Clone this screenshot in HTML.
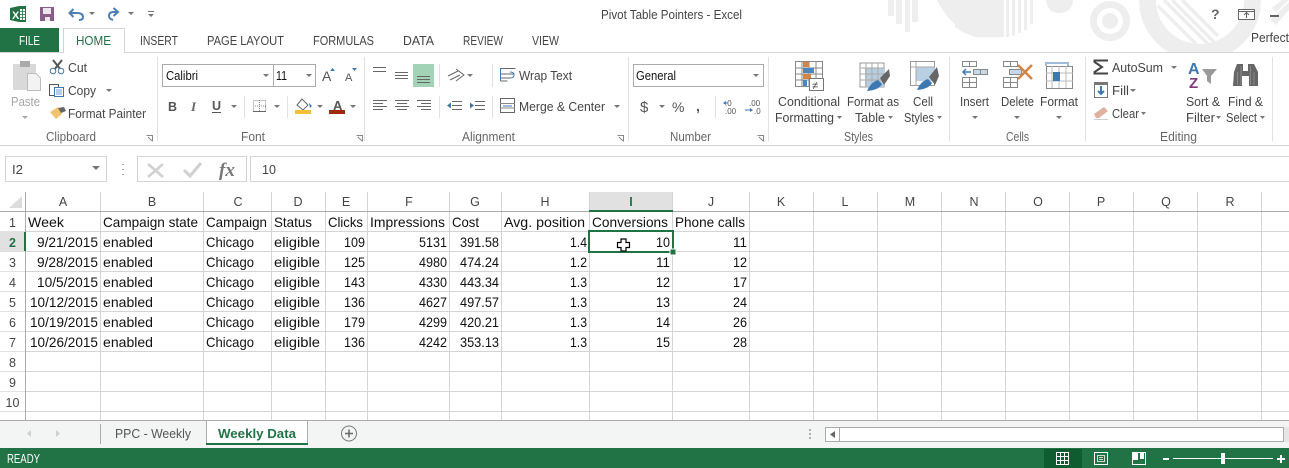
<!DOCTYPE html>
<html><head><meta charset="utf-8"><title>Pivot Table Pointers - Excel</title>
<style>
html,body{margin:0;padding:0;background:#fff;width:1289px;height:468px;overflow:hidden}
svg{display:block}
text{font-family:"Liberation Sans",sans-serif;white-space:pre}
.r{font-size:12.5px;fill:#444}
.g{font-size:12.5px;fill:#666}
.c{font-size:14px;fill:#111}
.h{font-size:12.5px;fill:#444}
.a{fill:#777}
</style></head><body>
<svg width="1289" height="468" viewBox="0 0 1289 468" xmlns="http://www.w3.org/2000/svg" shape-rendering="geometricPrecision">
<defs><clipPath id="ci"><circle cx="1200" cy="0" r="44"/></clipPath></defs>
<rect width="1289" height="468" fill="#fff"/>
<!-- watermark -->
<g fill="#eeeeee">
<rect x="888" y="0" width="6" height="16"/><rect x="896" y="0" width="6" height="24"/><rect x="905" y="0" width="5" height="32"/><rect x="912" y="0" width="6" height="22"/>
<path d="M937 0 L957 0 L957 26 Q945 16 937 0Z"/>
<path d="M955 0H1004V37H976Q964 34 955 27Z"/>
<path d="M1006 0h3V37h-3ZM1012 0h3V36h-3ZM1018 0h3V33h-3ZM1024 0h3V30h-3ZM1030 0h3V24h-3Z"/>
<path d="M1046 0H1073Q1072 13 1059 13 1047 13 1046 0Z"/>
<path fill-rule="evenodd" d="M1110 1a20 20 0 1 0 .01 0ZM1110 8a13 13 0 1 1-.01 0Z"/>
<circle cx="1110" cy="21" r="8"/>
<path fill-rule="evenodd" d="M1139 0a61 61 0 0 0 122 0ZM1156 0a44 44 0 0 0 88 0Z"/>
<g stroke="#eeeeee" stroke-width="3.500" fill="none" clip-path="url(#ci)"><path d="M1158 6L1200 48M1164 0L1212 48M1172 0L1214 42M1182 0L1218 36"/></g>
<path d="M1270 20L1289 2V10L1276 25Z M1282 0H1289L1276 12 1272 8Z"/>
</g>
<rect x="0" y="53" width="1289" height="93" fill="#fff"/>
<!-- title bar -->
<path d="M10 8L19 6H26V22H19L10 20Z" fill="#217346"/><rect x="19.500" y="8.500" width="6" height="12" fill="#fff" stroke="#217346"/>
<path d="M20 11.500H25M20 14.500H25M20 17.500H25M22.500 8V20" stroke="#217346" fill="none" stroke-width=".8"/>
<text x="12" y="19" fill="#fff" style="font-size:11px;font-weight:bold">X</text>
<path d="M40 7H54V21H40Z" fill="#8a5c88"/><rect x="43" y="8" width="8" height="6" fill="#eee6ed"/><rect x="45" y="17" width="5" height="4" fill="#eee6ed"/>
<path d="M73.500 9L69.500 13 73.500 17M70 13H77Q83 13 83 17 83 20 79 20" fill="none" stroke="#4a7eb5" stroke-width="2"/>
<path d="M89 12l6 0-3 3Z M128 12l6 0-3 3Z M148 14l6 0-3 3Z" fill="#777"/><path d="M148 11.500h6" stroke="#777"/>
<path d="M113.500 8L118 12 113.500 16M117 12H113Q109 12 109 16 109 19 113 20" fill="none" stroke="#4a7eb5" stroke-width="2"/>
<text class="r" x="601" y="19" textLength="141" lengthAdjust="spacingAndGlyphs">Pivot Table Pointers - Excel</text>
<text x="1211" y="19" style="font-size:14px;font-weight:bold" fill="#666">?</text>
<rect x="1238.500" y="9.500" width="16" height="10" fill="#fff" stroke="#666"/><path d="M1239 11.500H1254" stroke="#666"/><path d="M1246.500 18V13M1244 15L1246.500 12.500 1249 15" stroke="#666" fill="none"/>
<rect x="1270" y="15" width="9" height="2" fill="#666"/>
<text class="r" x="1251" y="42" textLength="38" lengthAdjust="spacingAndGlyphs">Perfect</text>
<!-- tabs -->
<rect x="0" y="28" width="59" height="25" fill="#217346"/>
<text x="19" y="45" textLength="21" lengthAdjust="spacingAndGlyphs" style="font-size:12.500px" fill="#fff">FILE</text>
<path d="M0 52.500H1289" stroke="#d4d4d4"/>
<path d="M63.500 53V28.500H124.500V53" fill="#fff" stroke="#d4d4d4"/><rect x="64" y="50" width="60" height="4" fill="#fff"/>
<text x="76" y="45" textLength="35" lengthAdjust="spacingAndGlyphs" style="font-size:12.500px" fill="#217346">HOME</text>
<text class="r" x="140" y="45" textLength="38" lengthAdjust="spacingAndGlyphs">INSERT</text>
<text class="r" x="207" y="45" textLength="77" lengthAdjust="spacingAndGlyphs">PAGE LAYOUT</text>
<text class="r" x="313" y="45" textLength="61" lengthAdjust="spacingAndGlyphs">FORMULAS</text>
<text class="r" x="403" y="45" textLength="31" lengthAdjust="spacingAndGlyphs">DATA</text>
<text class="r" x="463" y="45" textLength="40" lengthAdjust="spacingAndGlyphs">REVIEW</text>
<text class="r" x="532" y="45" textLength="27" lengthAdjust="spacingAndGlyphs">VIEW</text>
<!-- ribbon frame -->
<path d="M0 145.500H1289" stroke="#d4d4d4"/>
<path d="M157.500 57V141M364.500 57V141M628.500 57V141M768.500 57V141M949.500 57V141M1085.500 57V141M1272.500 57V141" stroke="#e1e1e1"/>
<text class="g" x="46" y="141" textLength="50" lengthAdjust="spacingAndGlyphs">Clipboard</text>
<text class="g" x="241" y="141" textLength="24" lengthAdjust="spacingAndGlyphs">Font</text>
<text class="g" x="462" y="141" textLength="53" lengthAdjust="spacingAndGlyphs">Alignment</text>
<text class="g" x="670" y="141" textLength="41" lengthAdjust="spacingAndGlyphs">Number</text>
<text class="g" x="844" y="141" textLength="29" lengthAdjust="spacingAndGlyphs">Styles</text>
<text class="g" x="1006" y="141" textLength="23" lengthAdjust="spacingAndGlyphs">Cells</text>
<text class="g" x="1160" y="141" textLength="37" lengthAdjust="spacingAndGlyphs">Editing</text>
<path d="M146.500 135.500h6v6M148 137l4 4M356.500 135.500h6v6M358 137l4 4M617.500 135.500h6v6M619 137l4 4M757.500 135.500h6v6M759 137l4 4" fill="none" stroke="#888"/>
<!-- clipboard -->
<rect x="13" y="64" width="23" height="26" fill="#d9d9d9"/><rect x="20" y="61" width="10" height="6" fill="#aaa"/>
<path d="M27.500 73.500H36L40.500 78V90.500H27.500Z" fill="#f3f3f3" stroke="#bdbdbd"/>
<text x="11" y="106" textLength="29" lengthAdjust="spacingAndGlyphs" style="font-size:12.500px" fill="#a6a6a6">Paste</text>
<path d="M22 116h6l-3 3Z" fill="#aaa"/>
<path d="M53 60L61 70M62 60L54 70" stroke="#555" stroke-width="2" fill="none"/><circle cx="53" cy="71" r="2.800" fill="#fff" stroke="#3e78b2"/><circle cx="61" cy="71" r="2.800" fill="#fff" stroke="#3e78b2"/>
<text class="r" x="68" y="72" textLength="19" lengthAdjust="spacingAndGlyphs">Cut</text>
<rect x="49.500" y="84.500" width="9" height="11" fill="#fff" stroke="#555"/><rect x="54.500" y="87.500" width="9" height="9" fill="#fff" stroke="#3e78b2"/><path d="M56 90h6M56 92h6M56 94h6" stroke="#3e78b2" stroke-width=".7"/>
<text class="r" x="68" y="95" textLength="28" lengthAdjust="spacingAndGlyphs">Copy</text><path class="a" d="M106 89h6l-3 3Z"/>
<path d="M50 112L58 107 62 114 56 119Z" fill="#f0c46e"/><path d="M58 108L64 107 66 111 61 113Z" fill="#666"/>
<text class="r" x="68" y="118" textLength="78" lengthAdjust="spacingAndGlyphs">Format Painter</text>
<!-- font -->
<rect x="162.500" y="64.500" width="153" height="22" fill="#fff" stroke="#ababab"/><path d="M273.500 64V87" stroke="#ababab"/>
<text class="r" x="166" y="80" textLength="32" lengthAdjust="spacingAndGlyphs" style="fill:#111">Calibri</text>
<text class="r" x="276" y="80" textLength="11" lengthAdjust="spacingAndGlyphs" style="fill:#111">11</text>
<path class="a" d="M263 74h6l-3 3ZM306 74h6l-3 3Z"/>
<text x="322" y="81" style="font-size:14px" fill="#555">A</text><path d="M330 71h5l-2.500-3Z" fill="#3e78b2"/>
<text x="345" y="81" style="font-size:11px" fill="#555">A</text><path d="M352 68h5l-2.500 3Z" fill="#3e78b2"/>
<text x="168" y="111" style="font-size:12.500px;font-weight:bold" fill="#555">B</text>
<text x="191" y="111" style="font-size:13px;font-style:italic;font-weight:bold;font-family:'Liberation Serif'" fill="#666">I</text>
<text x="212" y="110" style="font-size:12.500px;font-weight:bold" fill="#555">U</text><path d="M212 112.500h9" stroke="#555"/>
<path class="a" d="M231 105h6l-3 3ZM274 105h6l-3 3ZM317 105h6l-3 3ZM350 105h6l-3 3Z"/>
<path d="M244.500 96V118M287.500 96V118" stroke="#e1e1e1"/>
<rect x="253.500" y="100.500" width="12" height="11" fill="none" stroke="#888" stroke-dasharray="1 1"/><path d="M253 106h13M259.500 100v12" stroke="#888" stroke-dasharray="1 1"/>
<rect x="253" y="111" width="13" height="1" fill="#666"/>
<path d="M297 105L302 99 308 105 303 110Z" fill="#fff" stroke="#666"/><path d="M309 103l3 3-2 2Z" fill="#3e78b2"/><rect x="295" y="110" width="16" height="4" fill="#f2c037"/>
<text x="333" y="110" style="font-size:13px;font-weight:bold" fill="#555">A</text><rect x="329" y="110" width="16" height="4" fill="#a02a0e"/>
<!-- alignment -->
<rect x="413" y="64" width="21" height="23" fill="#a3d3b6"/>
<path d="M373 67.500h13M373 71.500h13M395 72.500h13M395 75.500h13M395 78.500h13M417 76.500h13M417 79.500h13M417 82.500h13" stroke="#666"/>
<path d="M373 100.500h14M373 103.500h10M373 106.500h14M373 109.500h10M395 100.500h14M397 103.500h10M395 106.500h14M397 109.500h10M417 100.500h14M421 103.500h10M417 106.500h14M421 109.500h10" stroke="#666"/>
<path d="M448 76L458 71M450 80L460 75M456 69L464 75 456 81" stroke="#666" fill="none"/><path class="a" d="M467 74h6l-3 3Z"/>
<path d="M439.500 64V87M439.500 96V118M492.500 64V87M492.500 96V118" stroke="#e1e1e1"/>
<path d="M452 101.500h10M452 105.500h10M452 109.500h10" stroke="#666"/><path d="M447 105.500l4-3v6Z" fill="#3e78b2"/>
<path d="M475 101.500h10M475 105.500h10M475 109.500h10" stroke="#666"/><path d="M474 105.500l-4-3v6Z" fill="#3e78b2"/>
<path d="M500.500 68.500h15M500.500 74h14M500.500 78h10M500.500 81h7" stroke="#666" fill="none"/><path d="M500.500 68v13M510 72q4 0 4 3 0 3-4 3" stroke="#3e78b2" fill="none"/>
<text class="r" x="519" y="80" textLength="53" lengthAdjust="spacingAndGlyphs">Wrap Text</text>
<rect x="500.500" y="98.500" width="14" height="14" fill="#fff" stroke="#666"/><path d="M500 103.500h15M500 108h15" stroke="#888"/><path d="M503 106h9" stroke="#3e78b2"/>
<text class="r" x="519" y="111" textLength="86" lengthAdjust="spacingAndGlyphs">Merge &amp; Center</text><path class="a" d="M614 105h6l-3 3Z"/>
<!-- number -->
<rect x="633.500" y="64.500" width="130" height="22" fill="#fff" stroke="#ababab"/>
<text class="r" x="636" y="80" textLength="40" lengthAdjust="spacingAndGlyphs" style="fill:#111">General</text><path class="a" d="M753 74h6l-3 3Z"/>
<text x="640" y="112" style="font-size:15px" fill="#555">$</text><path class="a" d="M659 105h6l-3 3Z"/>
<text x="672" y="112" style="font-size:14px" fill="#555">%</text>
<text x="696" y="111" style="font-size:14px;font-weight:bold" fill="#555">,</text>
<path d="M715.500 96V118" stroke="#e1e1e1"/>
<text x="725" y="106" style="font-size:8px" fill="#555">.0</text><text x="725" y="114" style="font-size:8px" fill="#555">.00</text>
<text x="749" y="106" style="font-size:8px" fill="#555">.00</text><text x="754" y="114" style="font-size:8px" fill="#555">.0</text>
<path d="M723 103l3-2v4Z" fill="#3e78b2"/><path d="M724 103h4M745 110h5" stroke="#3e78b2"/><path d="M753 110l-3-2v4Z" fill="#3e78b2"/>
<!-- styles -->
<g>
<path d="M795.500 61.500h27v25h-27ZM795.500 68h27M795.500 74h27M795.500 80h27M802 61v25M809 61v25M816 61v25" fill="#fff" stroke="#888"/>
<rect x="803" y="62" width="6" height="5" fill="#d58342"/><rect x="803" y="68" width="11" height="5" fill="#4a86bd"/><rect x="803" y="74" width="8" height="5" fill="#d58342"/><rect x="803" y="80" width="4" height="6" fill="#4a86bd"/>
<rect x="809.500" y="78.500" width="14" height="12" fill="#fff" stroke="#777"/><text x="812" y="89" style="font-size:11px" fill="#444">≠</text>
</g>
<text class="r" x="778" y="106" textLength="62" lengthAdjust="spacingAndGlyphs">Conditional</text>
<text class="r" x="775" y="122" textLength="59" lengthAdjust="spacingAndGlyphs">Formatting</text><path class="a" d="M837 116h5l-2.500 3Z"/>
<g>
<path d="M860 63h24v24h-24Z" fill="#fff" stroke="#999"/><rect x="865" y="68" width="19" height="19" fill="#b9cde0"/>
<path d="M860 68h24M860 74h24M860 80h24M866 63v24M872 63v24M878 63v24" stroke="#aaa" fill="none"/>
<path d="M884 85L890 76 889 69 880 78Z" fill="#666"/><path d="M867 91Q871 82 878 80L882 84Q879 90 867 91Z" fill="#3e78b2"/>
</g>
<text class="r" x="847" y="106" textLength="52" lengthAdjust="spacingAndGlyphs">Format as</text>
<text class="r" x="855" y="122" textLength="30" lengthAdjust="spacingAndGlyphs">Table</text><path class="a" d="M888 116h5l-2.500 3Z"/>
<g>
<rect x="910.500" y="61.500" width="24" height="24" fill="#fff" stroke="#999"/><rect x="916" y="67" width="19" height="14" fill="#b9cfe2"/>
<path d="M911 67h24M916 62v24" stroke="#aaa"/>
<path d="M935 85L939 76 937 67 929 77Z" fill="#666"/><path d="M917 90Q921 81 928 79L932 83Q929 89 917 90Z" fill="#3e78b2"/>
</g>
<text class="r" x="913" y="106" textLength="20" lengthAdjust="spacingAndGlyphs">Cell</text>
<text class="r" x="904" y="122" textLength="30" lengthAdjust="spacingAndGlyphs">Styles</text><path class="a" d="M937 116h5l-2.500 3Z"/>
<!-- cells -->
<path d="M962.500 61.500h14v5h-14ZM969.500 61v5M962.500 77.500h14v10h-14ZM962.500 82.500h14M969.500 77v10" fill="#fff" stroke="#888"/>
<rect x="973.500" y="69.500" width="14" height="5" fill="#c7d8e8" stroke="#888"/><path d="M980.500 69v5" stroke="#888"/><path d="M963 72h8M966 69l-3 3 3 3" stroke="#3e78b2" stroke-width="1.500" fill="none"/>
<text class="r" x="960" y="106" textLength="29" lengthAdjust="spacingAndGlyphs">Insert</text><path class="a" d="M972 116h6l-3 3Z"/>
<path d="M1003.500 61.500h14v5h-14ZM1010.500 61v5M1003.500 77.500h14v10h-14ZM1003.500 82.500h14M1010.500 77v10" fill="#fff" stroke="#888"/><rect x="1009.500" y="69.500" width="12" height="5" fill="#c7d8e8" stroke="#888"/>
<path d="M1018 65L1032 79M1032 65L1018 79" stroke="#d58342" stroke-width="2.500"/>
<text class="r" x="1001" y="106" textLength="33" lengthAdjust="spacingAndGlyphs">Delete</text><path class="a" d="M1014 116h6l-3 3Z"/>
<path d="M1046 62v4M1068 62v4M1047 63h20" stroke="#3e78b2" fill="none"/>
<rect x="1046.500" y="66.500" width="26" height="22" fill="#fff" stroke="#888"/><path d="M1046 73h27M1046 81h27M1052 66v22M1059 66v22M1066 66v22" stroke="#bbb"/><rect x="1053" y="72" width="7" height="9" fill="#3e78b2"/>
<text class="r" x="1040" y="106" textLength="38" lengthAdjust="spacingAndGlyphs">Format</text><path class="a" d="M1056 116h6l-3 3Z"/>
<!-- editing -->
<path d="M1108 60.500H1094.500V62L1102 67 1094.500 72V73.500H1108" fill="none" stroke="#444" stroke-width="2"/>
<text class="r" x="1112" y="72" textLength="51" lengthAdjust="spacingAndGlyphs">AutoSum</text><path class="a" d="M1171 66h6l-3 3Z"/>
<rect x="1094.500" y="82.500" width="13" height="15" fill="#fff" stroke="#777"/><rect x="1094" y="82" width="14" height="3" fill="#777"/><path d="M1101 86v8M1098 91l3 3 3-3" stroke="#3e78b2" stroke-width="2" fill="none"/>
<text class="r" x="1112" y="95" textLength="17" lengthAdjust="spacingAndGlyphs">Fill</text><path class="a" d="M1130 89h6l-3 3Z"/>
<path d="M1094 114L1104 107 1108 111 1099 118H1096Z" fill="#e0b0a0"/><path d="M1094 119.500h14" stroke="#ccc"/>
<text class="r" x="1112" y="118" textLength="27" lengthAdjust="spacingAndGlyphs">Clear</text><path class="a" d="M1141 112h5l-2.500 3Z"/>
<text x="1188" y="74" style="font-size:16px;font-weight:bold" fill="#3e78b2">A</text>
<text x="1189" y="88" style="font-size:15px;font-weight:bold" fill="#80397b">Z</text>
<path d="M1202 69H1217L1211 76V84L1207 81V76Z" fill="#9a9a9a"/>
<text class="r" x="1186" y="106" textLength="34" lengthAdjust="spacingAndGlyphs">Sort &amp;</text>
<text class="r" x="1186" y="122" textLength="29" lengthAdjust="spacingAndGlyphs">Filter</text><path class="a" d="M1216 116h5l-2.500 3Z"/>
<path d="M1234 72L1237 64H1243V71H1248V64H1254L1258 72V86H1249V76H1242V86H1233Z" fill="#666"/><path d="M1237.500 72V85M1241 66V85M1250.500 66V85M1254 72V85" stroke="#8a8a8a"/>
<text class="r" x="1228" y="106" textLength="35" lengthAdjust="spacingAndGlyphs">Find &amp;</text>
<text class="r" x="1226" y="122" textLength="31" lengthAdjust="spacingAndGlyphs">Select</text><path class="a" d="M1260 116h5l-2.500 3Z"/>
<!-- formula bar -->
<rect x="5.500" y="156.500" width="101" height="25" fill="#fff" stroke="#d4d4d4"/>
<text class="r" x="12" y="174" textLength="11" lengthAdjust="spacingAndGlyphs">I2</text><path d="M92 166h8l-4 4Z" fill="#777"/>
<path d="M122 164.500h2M122 169.500h2M122 174.500h2" stroke="#aaa"/>
<rect x="137.500" y="156.500" width="109" height="25" fill="#fff" stroke="#d4d4d4"/>
<path d="M148 164L163 177M163 164L148 177" stroke="#d0d0d0" stroke-width="2.500"/>
<path d="M184 170L190 176 201 163" stroke="#d0d0d0" stroke-width="3" fill="none"/>
<text x="219" y="176" style="font-size:19px;font-style:italic;font-weight:bold;font-family:'Liberation Serif'" fill="#777">fx</text>
<rect x="250.500" y="156.500" width="1040" height="25" fill="#fff" stroke="#d4d4d4"/>
<text class="r" x="262" y="174" textLength="14">10</text>
<!-- grid -->
<rect x="589" y="192" width="84" height="19" fill="#e1e1e1"/><rect x="0" y="232" width="25" height="19" fill="#e1e1e1"/>
<path d="M100.500 192V420M203.500 192V420M271.500 192V420M325.500 192V420M367.500 192V420M449.500 192V420M501.500 192V420M589.500 192V420M672.500 192V420M749.500 192V420M813.500 192V420M877.500 192V420M941.500 192V420M1005.500 192V420M1069.500 192V420M1133.500 192V420M1197.500 192V420M1261.500 192V420" stroke="#d4d4d4"/>
<path d="M25 231.500H1289M25 251.500H1289M25 271.500H1289M25 291.500H1289M25 311.500H1289M25 331.500H1289M25 351.500H1289M25 371.500H1289M25 391.500H1289M25 411.500H1289" stroke="#d4d4d4"/>
<path d="M0 231.500H25M0 251.500H25M0 271.500H25M0 291.500H25M0 311.500H25M0 331.500H25M0 351.500H25M0 371.500H25M0 391.500H25M0 411.500H25" stroke="#e1e1e1"/>
<path d="M0 211.500H1289M25.500 192V420" stroke="#ababab"/>
<path d="M22 196V208H9Z" fill="#dcdcdc"/>
<rect x="589" y="210" width="84" height="2" fill="#217346"/><rect x="24" y="232" width="2" height="19" fill="#217346"/>
<g text-anchor="middle">
<text class="h" x="63" y="206">A</text><text class="h" x="152" y="206">B</text><text class="h" x="238" y="206">C</text><text class="h" x="298" y="206">D</text><text class="h" x="346" y="206">E</text><text class="h" x="409" y="206">F</text><text class="h" x="475" y="206">G</text><text class="h" x="545" y="206">H</text><text x="631" y="206" style="font-size:12.500px;font-weight:bold" fill="#217346">I</text><text class="h" x="711" y="206">J</text><text class="h" x="781" y="206">K</text><text class="h" x="845" y="206">L</text><text class="h" x="910" y="206">M</text><text class="h" x="974" y="206">N</text><text class="h" x="1038" y="206">O</text><text class="h" x="1101" y="206">P</text><text class="h" x="1166" y="206">Q</text><text class="h" x="1230" y="206">R</text>
<text class="h" x="12.500" y="227">1</text><text x="12.500" y="247" style="font-size:12.500px;font-weight:bold" fill="#217346">2</text><text class="h" x="12.500" y="267">3</text><text class="h" x="12.500" y="287">4</text><text class="h" x="12.500" y="307">5</text><text class="h" x="12.500" y="327">6</text><text class="h" x="12.500" y="347">7</text><text class="h" x="12.500" y="367">8</text><text class="h" x="12.500" y="387">9</text><text class="h" x="12.500" y="407">10</text>
</g>
<g>
<text class="c" x="28" y="227" textLength="36" lengthAdjust="spacingAndGlyphs">Week</text>
<text class="c" x="103" y="227" textLength="95" lengthAdjust="spacingAndGlyphs">Campaign state</text>
<text class="c" x="206" y="227" textLength="61" lengthAdjust="spacingAndGlyphs">Campaign</text>
<text class="c" x="274" y="227" textLength="38" lengthAdjust="spacingAndGlyphs">Status</text>
<text class="c" x="328" y="227" textLength="35" lengthAdjust="spacingAndGlyphs">Clicks</text>
<text class="c" x="370" y="227" textLength="75" lengthAdjust="spacingAndGlyphs">Impressions</text>
<text class="c" x="452" y="227" textLength="27" lengthAdjust="spacingAndGlyphs">Cost</text>
<text class="c" x="504" y="227" textLength="81" lengthAdjust="spacingAndGlyphs">Avg. position</text>
<text class="c" x="592" y="227" textLength="76" lengthAdjust="spacingAndGlyphs">Conversions</text>
<text class="c" x="675" y="227" textLength="70" lengthAdjust="spacingAndGlyphs">Phone calls</text>
</g>
<g>
<text class="c" x="37" y="247" textLength="61" lengthAdjust="spacingAndGlyphs">9/21/2015</text><text class="c" x="103" y="247" textLength="50" lengthAdjust="spacingAndGlyphs">enabled</text><text class="c" x="206" y="247" textLength="48" lengthAdjust="spacingAndGlyphs">Chicago</text><text class="c" x="274" y="247" textLength="46" lengthAdjust="spacingAndGlyphs">eligible</text><text class="c" x="344" y="247" textLength="21" lengthAdjust="spacingAndGlyphs">109</text><text class="c" x="419" y="247" textLength="28" lengthAdjust="spacingAndGlyphs">5131</text><text class="c" x="460" y="247" textLength="39" lengthAdjust="spacingAndGlyphs">391.58</text><text class="c" x="570" y="247" textLength="17" lengthAdjust="spacingAndGlyphs">1.4</text><text class="c" x="656" y="247" textLength="14" lengthAdjust="spacingAndGlyphs">10</text><text class="c" x="733" y="247" textLength="14" lengthAdjust="spacingAndGlyphs">11</text>
<text class="c" x="37" y="267" textLength="61" lengthAdjust="spacingAndGlyphs">9/28/2015</text><text class="c" x="103" y="267" textLength="50" lengthAdjust="spacingAndGlyphs">enabled</text><text class="c" x="206" y="267" textLength="48" lengthAdjust="spacingAndGlyphs">Chicago</text><text class="c" x="274" y="267" textLength="46" lengthAdjust="spacingAndGlyphs">eligible</text><text class="c" x="344" y="267" textLength="21" lengthAdjust="spacingAndGlyphs">125</text><text class="c" x="419" y="267" textLength="28" lengthAdjust="spacingAndGlyphs">4980</text><text class="c" x="460" y="267" textLength="39" lengthAdjust="spacingAndGlyphs">474.24</text><text class="c" x="570" y="267" textLength="17" lengthAdjust="spacingAndGlyphs">1.2</text><text class="c" x="656" y="267" textLength="14" lengthAdjust="spacingAndGlyphs">11</text><text class="c" x="733" y="267" textLength="14" lengthAdjust="spacingAndGlyphs">12</text>
<text class="c" x="37" y="287" textLength="61" lengthAdjust="spacingAndGlyphs">10/5/2015</text><text class="c" x="103" y="287" textLength="50" lengthAdjust="spacingAndGlyphs">enabled</text><text class="c" x="206" y="287" textLength="48" lengthAdjust="spacingAndGlyphs">Chicago</text><text class="c" x="274" y="287" textLength="46" lengthAdjust="spacingAndGlyphs">eligible</text><text class="c" x="344" y="287" textLength="21" lengthAdjust="spacingAndGlyphs">143</text><text class="c" x="419" y="287" textLength="28" lengthAdjust="spacingAndGlyphs">4330</text><text class="c" x="460" y="287" textLength="39" lengthAdjust="spacingAndGlyphs">443.34</text><text class="c" x="570" y="287" textLength="17" lengthAdjust="spacingAndGlyphs">1.3</text><text class="c" x="656" y="287" textLength="14" lengthAdjust="spacingAndGlyphs">12</text><text class="c" x="733" y="287" textLength="14" lengthAdjust="spacingAndGlyphs">17</text>
<text class="c" x="30" y="307" textLength="68" lengthAdjust="spacingAndGlyphs">10/12/2015</text><text class="c" x="103" y="307" textLength="50" lengthAdjust="spacingAndGlyphs">enabled</text><text class="c" x="206" y="307" textLength="48" lengthAdjust="spacingAndGlyphs">Chicago</text><text class="c" x="274" y="307" textLength="46" lengthAdjust="spacingAndGlyphs">eligible</text><text class="c" x="344" y="307" textLength="21" lengthAdjust="spacingAndGlyphs">136</text><text class="c" x="419" y="307" textLength="28" lengthAdjust="spacingAndGlyphs">4627</text><text class="c" x="460" y="307" textLength="39" lengthAdjust="spacingAndGlyphs">497.57</text><text class="c" x="570" y="307" textLength="17" lengthAdjust="spacingAndGlyphs">1.3</text><text class="c" x="656" y="307" textLength="14" lengthAdjust="spacingAndGlyphs">13</text><text class="c" x="733" y="307" textLength="14" lengthAdjust="spacingAndGlyphs">24</text>
<text class="c" x="30" y="327" textLength="68" lengthAdjust="spacingAndGlyphs">10/19/2015</text><text class="c" x="103" y="327" textLength="50" lengthAdjust="spacingAndGlyphs">enabled</text><text class="c" x="206" y="327" textLength="48" lengthAdjust="spacingAndGlyphs">Chicago</text><text class="c" x="274" y="327" textLength="46" lengthAdjust="spacingAndGlyphs">eligible</text><text class="c" x="344" y="327" textLength="21" lengthAdjust="spacingAndGlyphs">179</text><text class="c" x="419" y="327" textLength="28" lengthAdjust="spacingAndGlyphs">4299</text><text class="c" x="460" y="327" textLength="39" lengthAdjust="spacingAndGlyphs">420.21</text><text class="c" x="570" y="327" textLength="17" lengthAdjust="spacingAndGlyphs">1.3</text><text class="c" x="656" y="327" textLength="14" lengthAdjust="spacingAndGlyphs">14</text><text class="c" x="733" y="327" textLength="14" lengthAdjust="spacingAndGlyphs">26</text>
<text class="c" x="30" y="347" textLength="68" lengthAdjust="spacingAndGlyphs">10/26/2015</text><text class="c" x="103" y="347" textLength="50" lengthAdjust="spacingAndGlyphs">enabled</text><text class="c" x="206" y="347" textLength="48" lengthAdjust="spacingAndGlyphs">Chicago</text><text class="c" x="274" y="347" textLength="46" lengthAdjust="spacingAndGlyphs">eligible</text><text class="c" x="344" y="347" textLength="21" lengthAdjust="spacingAndGlyphs">136</text><text class="c" x="419" y="347" textLength="28" lengthAdjust="spacingAndGlyphs">4242</text><text class="c" x="460" y="347" textLength="39" lengthAdjust="spacingAndGlyphs">353.13</text><text class="c" x="570" y="347" textLength="17" lengthAdjust="spacingAndGlyphs">1.3</text><text class="c" x="656" y="347" textLength="14" lengthAdjust="spacingAndGlyphs">15</text><text class="c" x="733" y="347" textLength="14" lengthAdjust="spacingAndGlyphs">28</text>
</g>
<!-- selection -->
<rect x="589" y="231" width="84" height="21" fill="none" stroke="#217346" stroke-width="2"/>
<rect x="670" y="249" width="6" height="6" fill="#217346" stroke="#fff"/>
<path d="M621 239h5v3.500h3.500v5H626v3.500h-5v-3.500h-3.500v-5H621Z" fill="#fff" stroke="#000" stroke-width="1.200"/>
<!-- sheet tabs -->
<rect x="0" y="421" width="1289" height="27" fill="#f3f4f4"/>
<path d="M0 420.500H1289" stroke="#ababab"/>
<path d="M31 430l-4 3.500 4 3.500ZM56 430l4 3.500-4 3.500Z" fill="#cfcfcf"/>
<path d="M100.500 424V444" stroke="#ababab"/>
<text x="115" y="438" textLength="76" lengthAdjust="spacingAndGlyphs" style="font-size:13px" fill="#555">PPC - Weekly</text>
<path d="M206.500 444V420.500H307.500V444" fill="#fff" stroke="#ababab"/><rect x="206" y="443" width="102" height="2" fill="#217346"/>
<text x="218" y="438" textLength="78" lengthAdjust="spacingAndGlyphs" style="font-size:13px;font-weight:bold" fill="#217346">Weekly Data</text>
<circle cx="349" cy="433.500" r="7.500" fill="none" stroke="#777"/><path d="M345 433.500h8M349 429.500v8" stroke="#666" stroke-width="1.500"/>
<path d="M809 429h2v2h-2ZM809 433h2v2h-2ZM809 437h2v2h-2Z" fill="#b0b0b0"/>
<rect x="825.500" y="427.500" width="458" height="14" fill="#fff" stroke="#ababab"/><path d="M839.500 428V441" stroke="#ababab"/>
<path d="M830 434.500l5-3.500v7Z" fill="#666"/>
<rect x="1284" y="427" width="5" height="15" fill="#e6e6e6"/>
<!-- status bar -->
<rect x="0" y="448" width="1289" height="20" fill="#217346"/>
<text x="7" y="463" textLength="33" lengthAdjust="spacingAndGlyphs" style="font-size:12.500px" fill="#fff">READY</text>
<rect x="1044" y="449" width="38" height="19" fill="#0e5c2f"/>
<path d="M1056.500 452.500h12v12h-12ZM1056.500 456.500h12M1056.500 460.500h12M1060.500 452v13M1064.500 452v13" fill="none" stroke="#fff"/>
<rect x="1094.500" y="452.500" width="13" height="12" fill="none" stroke="#fff"/><path d="M1097.500 455.500h7v6h-7ZM1099 457.500h4M1099 459.500h4" fill="none" stroke="#fff" stroke-width=".8"/>
<rect x="1132.500" y="452.500" width="13" height="12" fill="none" stroke="#fff"/><path d="M1133 453h5v7h-5ZM1140 453h4v6h-4Z" fill="#fff"/>
<rect x="1163" y="458" width="6" height="2" fill="#fff"/>
<rect x="1173" y="458" width="100" height="1" fill="#fff"/>
<rect x="1221" y="453" width="4" height="11" fill="#fff"/>
<path d="M1277 459h8M1281 455v8" stroke="#fff" stroke-width="2"/>
</svg>
</body></html>
